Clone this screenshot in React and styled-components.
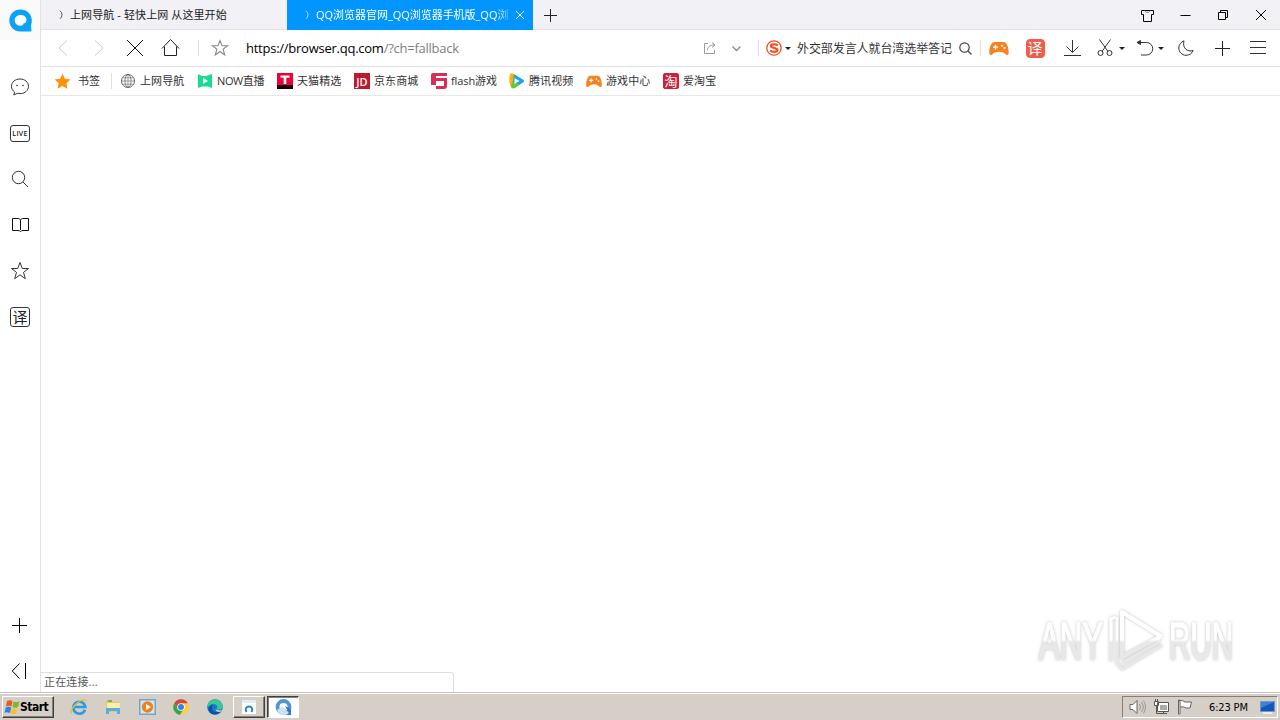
import React from "react";
import styled, { createGlobalStyle, css } from "styled-components";

const GlobalStyle = createGlobalStyle`
  * { box-sizing: border-box; }
  body { margin: 0; overflow: hidden; background: #fff; }
  svg { display: block; flex: none; overflow: visible; }
`;

const uiFont = `"Open Sans", "Noto Sans CJK SC", sans-serif`;

const Desktop = styled.div`
  position: relative;
  display: flex;
  flex-direction: column;
  width: 1280px;
  height: 720px;
  font-family: ${uiFont};
  font-size: 11px;
  color: #333;
  white-space: nowrap;
`;

const BrowserWindow = styled.div`
  display: flex;
  height: 692px;
`;

const Sidebar = styled.nav`
  display: flex;
  flex-direction: column;
  gap: 6px;
  width: 41px;
  padding-bottom: 1px;
  border-right: 1px solid #e2e2e2;
  background: #fff;
`;

const SideSlot = styled.div`
  display: flex;
  align-items: center;
  justify-content: center;
  height: 40px;
  margin-top: ${(p) => p.$mt || "0"};
  padding-left: ${(p) => p.$pl || 0}px;
  padding-right: ${(p) => p.$pr || 0}px;
  background: ${(p) => p.$bg || "transparent"};
`;

const Main = styled.main`
  position: relative;
  display: flex;
  flex-direction: column;
  flex: 1;
`;

const TabStrip = styled.div`
  display: flex;
  height: 30px;
  background: #f1f1f6;
  box-shadow: inset 0 -1px #e3e3e6;
`;

const Tab = styled.div`
  display: flex;
  align-items: center;
  width: 246px;
  height: 30px;
  padding-left: 18px;
  ${(p) =>
    p.$active
      ? css`
          color: #fff;
          background: #0095ff;
        `
      : css`
          color: #222;
        `}
`;

const TabTitle = styled.span`
  width: 193px;
  margin: 0 4px 0 6px;
  line-height: 20px;
  letter-spacing: ${(p) => p.$ls || "0"};
  mask-image: ${(p) => (p.$fade ? "linear-gradient(90deg, #000 93%, rgba(0,0,0,.3))" : "none")};
`;

const Spacer = styled.div`
  flex: 1;
`;

const Slot = styled.div`
  display: flex;
  flex: none;
  align-items: center;
  justify-content: center;
  width: ${(p) => p.$w || 36}px;
  margin-left: ${(p) => p.$ml || 0}px;
`;

const Toolbar = styled.div`
  display: flex;
  align-items: center;
  height: 37px;
  padding: 0 4px;
  border-bottom: 1px solid #e2e2e2;
`;

const Divider = styled.i`
  width: 1px;
  height: 16px;
  margin-left: ${(p) => p.$ml}px;
  background: #e0e0e0;
`;

const Address = styled.div`
  flex: 1;
  padding-left: 8px;
  font-size: 13px;
  line-height: 20px;
  letter-spacing: ${(p) => p.$ls};
  color: #000;
  span { color: #808080; }
`;

const SearchText = styled.div`
  width: 156px;
  margin: 1px 0 0 4px;
  font-size: 12px;
  line-height: 20px;
  letter-spacing: -0.08px;
`;

const Caret = styled.i`
  border: 3px solid transparent;
  border-top-color: #222;
  border-bottom: 0;
`;

const Bookmarks = styled.div`
  display: flex;
  align-items: center;
  height: 29px;
  padding-left: 13px;
  border-bottom: 1px solid #e8e8e8;
`;

const Bookmark = styled.div`
  display: flex;
  align-items: center;
  gap: ${(p) => p.$gap || 4}px;
  width: ${(p) => p.$w}px;
  line-height: 18px;
  letter-spacing: ${(p) => p.$ls || "0.1px"};
`;

const StatusBubble = styled.div`
  width: 413px;
  height: 20px;
  padding-left: 3px;
  border: 1px solid #dedede;
  border-width: 1px 1px 0 0;
  border-radius: 0 3px 0 0;
  line-height: 18px;
  letter-spacing: 0.15px;
  color: #555;
`;

const Watermark = styled.svg`
  position: absolute;
  left: 990px;
  top: 602px;
`;

const Taskbar = styled.footer`
  display: flex;
  align-items: center;
  height: 28px;
  padding: 1px 2px 0;
  background: #d6cfc7;
  border-top: 1px solid #c8c3bc;
  box-shadow: inset 0 1px #fff;
`;

const raised = css`
  border: 1px solid;
  border-color: #fff #404040 #404040 #fff;
  box-shadow: inset -1px -1px #857f78;
`;

const StartButton = styled.button`
  display: flex;
  align-items: center;
  width: 52px;
  height: 22px;
  padding: 0 0 0 1px;
  background: #d6cfc7;
  ${raised}
  font: bold 12px "DejaVu Sans Condensed", "DejaVu Sans", sans-serif;
  letter-spacing: -0.5px;
  color: #000;
`;

const TaskButton = styled.div`
  display: flex;
  align-items: center;
  justify-content: center;
  width: 32px;
  height: 22px;
  margin-left: ${(p) => p.$ml || 0}px;
  background: #d6cfc7;
  ${raised}
  ${(p) =>
    p.$active &&
    css`
      background: #fff;
      border-color: #404040 #fff #fff #404040;
      box-shadow: inset 1px 1px #857f78;
    `}
`;

const Tray = styled.div`
  display: flex;
  align-items: center;
  width: 156px;
  height: 22px;
  border: 1px solid;
  border-color: #857f78 #fff #fff #857f78;
`;

const Clock = styled.span`
  width: 41px;
  margin-left: 12px;
  font: 11px "DejaVu Sans Condensed", "DejaVu Sans", sans-serif;
  letter-spacing: -0.15px;
  color: #000;
`;

const Icon = ({ w = 20, h, s = "#333", sw = 1, f = "none", children }) => (
  <svg width={w} height={h || w} viewBox={`0 0 ${w} ${h || w}`} fill={f} stroke={s} strokeWidth={sw}>
    {children}
  </svg>
);

const starPath = "M10 1.5l2.3 6h6.2l-5 3.9 1.8 6.3-5.3-3.8-5.3 3.8 1.8-6.3-5-3.9h6.2z";
const fullStarPath = "M10 1l2.900 5.800 6.300.8-4.600 4.400 1.200 6.500L10 15.400 4.200 18.500l1.200-6.500L.8 7.600l6.300-.8z";

const Spinner = ({ s }) => (
  <Icon w={5} h={10} s={s}><path d="M1 .8q2 1.400 2 4t-2 4" /></Icon>
);

const QQLogo = () => (
  <svg width="23" height="23" viewBox="0 0 24 24">
    <path fill="#0ca2f8" d="M12 .5C5.200.5.3 5.600.3 12S5.400 23.500 12 23.500h10.500q1 0 1-1l-.6-5.300c.6-1.500.9-3.300.9-5.200C23.800 5.600 18.800.5 12 .5z" />
    <path fill="#fff" d="M12.200 6.200c-4 0-6.200 2.600-6.200 5.600 0 3.400 2.600 5.800 6 5.600 2.400-.1 3.200-1.200 3-2.500 1.500 0 3-.8 3.200-3 .3-3.400-2.400-5.700-6-5.700z" />
  </svg>
);

const Gamepad = ({ w = 20, h = 15 }) => (
  <svg width={w} height={h} viewBox="0 0 20 16" preserveAspectRatio="none">
    <path fill="#f78320" d="M5.500 1h9c4 0 5.500 8 5.200 12-.2 2.400-2 2.300-3.400.9-3-3.400-9.600-3.400-12.600 0C2.300 15.300.5 15.400.3 13 0 9 1.500 1 5.500 1z" />
    <path stroke="#fff" strokeWidth="1.500" d="M6.500 4v5M4 6.500h5" />
    <circle cx="13" cy="5" r="1.100" fill="#fff" />
    <circle cx="15.500" cy="7.500" r="1.100" fill="#fff" />
  </svg>
);

const Glyph = styled.span`
  display: flex;
  align-items: center;
  justify-content: center;
  width: ${(p) => p.$size}px;
  height: ${(p) => p.$size}px;
  border: 1px solid ${(p) => p.$line || p.$bg};
  border-radius: ${(p) => (p.$r === undefined ? 3 : p.$r)}px;
  background: ${(p) => p.$bg || "none"};
  color: ${(p) => p.$color || "#fff"};
  font-size: ${(p) => p.$fs}px;
  font-weight: ${(p) => p.$weight || 400};
  line-height: 1;
  letter-spacing: 0;
`;

const LiveBadge = styled(Glyph)`
  width: 20px;
  height: 17px;
  font: 600 7px "Open Sans", sans-serif;
  letter-spacing: 0.3px;
`;

const sideTools = [
  <Icon><path d="M10 2c-5 0-8.500 3.200-8.500 7.300 0 2.500 1.200 4.400 3 5.700L3.800 18l3.600-1.700c.8.200 1.700.3 2.600.3 5 0 8.500-3.200 8.500-7.300S15 2 10 2z" /><circle cx="7" cy="8.500" r=".8" fill="#333" stroke="none" /><circle cx="13" cy="8.500" r=".8" fill="#333" stroke="none" /></Icon>,
  <LiveBadge $line="#333" $color="#222">LIVE</LiveBadge>,
  <Icon><circle cx="8.500" cy="8.500" r="6.200" /><path d="M13 13l5 5" /></Icon>,
  <Icon s="#111"><path d="M10.500 5V15M10.500 5C10 4 9 3.500 8 3.500H2.500v12H8c1 0 2 .5 2.500 1 .5-.5 1.500-1 2.500-1h5.500v-12H13c-1 0-2 .5-2.500 1.500z" /></Icon>,
  <Icon><path d={starPath} /></Icon>,
  <Glyph $size={20} $fs={15} $line="#333" $color="#222">译</Glyph>,
];

const bookmarks = [
  { w: 77, gap: 4, text: "上网导航", icon: <Icon w={16} s="#666"><circle cx="8" cy="8" r="6.500" /><ellipse cx="8" cy="8" rx="3" ry="6.500" strokeWidth=".8" /><path d="M1.500 8h13M2.500 4.800h11M2.500 11.200h11M8 1.500v13" strokeWidth=".6" /></Icon> },
  { w: 80, ls: "-0.4px", text: "NOW直播", icon: <Icon w={16} s="none"><path fill="#18dc92" d="M1 1l4 2 4 0 6-2v14l-4-1.500H5L1 15z" /><path fill="#fff" d="M6 5l5 3-5 3z" /></Icon> },
  { w: 77, text: "天猫精选", icon: <Icon w={16} s="none"><path fill="#f00037" d="M0 0h16v12H0z" /><path fill="#170006" d="M0 12h16v4H0z" /><path fill="#fff" d="M3.500 2.500h9v2.300H9.300V11H6.700V4.800H3.500z" /></Icon> },
  { w: 77, text: "京东商城", icon: <Glyph $size={16} $bg="#bd1a2d" $fs={11} $r={0} $weight={600}>JD</Glyph> },
  { w: 78, ls: "-0.1px", text: "flash游戏", icon: <Icon w={16} s="none"><path fill="#dc2b54" d="M2 0h14v3H5v2h11v8q0 3-3 3H5v-3h8V8H5v4H0V2q0-2 2-2z" /></Icon> },
  { w: 77, text: "腾讯视频", icon: <Icon w={16} s="none"><path fill="#ffb000" d="M.5 4C1-1 3 .1 6 1.700l3 2.100-7 9.700C.3 10.500.2 7 .5 4z" /><path fill="#19a6ef" d="M5 1.200l9 5.300q2 1.500 0 3l-8 5.300q-2 1-3-.5z" /><path fill="#64c932" d="M1.700 13C3 16 4 15.800 6 14.800L11 11.500 4 9z" /><path fill="#fff" d="M5.500 5l5 3-5 3z" /></Icon> },
  { w: 77, text: "游戏中心", icon: <Gamepad w={16} h={13} /> },
  { w: 60, text: "爱淘宝", icon: <Glyph $size={16} $bg="#cf2038" $fs={13} $r={2}>淘</Glyph> },
];

const Plus = ({ w = 15, s = "#222" }) => (
  <Icon w={w} s={s}><path d={`M${w / 2} 0v${w}M0 ${w / 2}h${w}`} /></Icon>
);

export default function App() {
  return (
    <Desktop>
      <GlobalStyle />
      <BrowserWindow>
        <Sidebar>
          <SideSlot $bg="#fafafa" $pl={1}><QQLogo /></SideSlot>
          {sideTools.map((icon, i) => (
            <SideSlot key={i} $mt={i === 0 ? "21px" : "0"}>{icon}</SideSlot>
          ))}
          <SideSlot $mt="auto" $pr={1}><Plus s="#000" /></SideSlot>
          <SideSlot $pr={2}><Icon w={16} s="#000"><path d="M8.500.5L1.300 8l7.200 7.500M14.500 0v16" /></Icon></SideSlot>
        </Sidebar>
        <Main>
          <TabStrip>
            <Tab>
              <Spinner s="#555" />
              <TabTitle $ls="0.1px">上网导航 - 轻快上网 从这里开始</TabTitle>
            </Tab>
            <Tab $active>
              <Spinner s="#bfe3ff" />
              <TabTitle $fade $ls="-0.03px">QQ浏览器官网_QQ浏览器手机版_QQ浏</TabTitle>
              <Icon w={14} s="#fff"><path d="M3 3l8 8M11 3l-8 8" /></Icon>
            </Tab>
            <Slot $w={35}><Plus w={13} /></Slot>
            <Spacer />
            <Slot $w={38}><Icon w={13} s="#000"><path d="M.5 1.500h12v4h-2v7h-8v-7h-2z" /><path d="M4 1.500c.5 2.500 4.500 2.500 5 0" stroke="#777" /></Icon></Slot>
            <Slot $w={38}><Icon w={11} h={1} s="#000"><path d="M.5.5h10" /></Icon></Slot>
            <Slot $w={38}><Icon w={10} s="#000"><path d="M.5 2.500h7v7h-7zM2.500 2.500v-2h7v7h-2" /></Icon></Slot>
            <Slot $w={38}><Icon w={10} s="#000"><path d="M0 0l10 10M10 0L0 10" /></Icon></Slot>
          </TabStrip>
          <Toolbar>
            <Slot><Icon w={16} s="#ccc"><path d="M12 .5L4 8l8 7.500" /></Icon></Slot>
            <Slot><Icon w={16} s="#ccc"><path d="M4 .5L12 8l-8 7.500" /></Icon></Slot>
            <Slot><Icon w={16} s="#111"><path d="M0 0l16 16M16 0L0 16" /></Icon></Slot>
            <Slot><Icon w={20} s="#222"><path d="M1 10.500L9.500 1.500l8.500 9M3.500 8.500v9h12v-9" /></Icon></Slot>
            <Divider $ml={9} />
            <Slot $ml={3}><svg width="16" height="16" viewBox="1 1 18 18" fill="none" stroke="#888" strokeWidth="1.200"><path d={starPath} /></svg></Slot>
            <Address $ls="-0.25px">https://browser.qq.com<span>/?ch=fallback</span></Address>
            <Slot $w={24}><Icon w={12} s="#999"><path d="M4 1.500H.5v10h10V8M3.500 8.500c0-3.500 2-5.500 7-5.500M8 .5L11 3 8 5.500" /></Icon></Slot>
            <Slot $w={28}><Icon w={9} h={5} s="#888" sw={1.3}><path d="M.5.5l4 4 4-4" /></Icon></Slot>
            <Divider $ml={8} />
            <Slot $w={16} $ml={7}>
              <Icon w={16} s="#f05023" sw={1.3}><circle cx="8" cy="8" r="7.200" /><path strokeWidth="2.200" d="M12 5.200C9 3.700 4.800 4 4.800 6s6.700 1.700 6.700 4-4.500 2.200-7.500.8" /></Icon>
            </Slot>
            <Slot $w={11}><Caret /></Slot>
            <SearchText>外交部发言人就台湾选举答记</SearchText>
            <Slot $w={25}><Icon w={13} s="#444" sw={1.2}><circle cx="5.500" cy="5.500" r="4.700" /><path d="M9 9l3.500 3.500" /></Icon></Slot>
            <Divider $ml={2} />
            <Slot><Gamepad /></Slot>
            <Slot><Glyph $size={19} $bg="#f15b49" $fs={15} $r={4}>译</Glyph></Slot>
            <Slot $w={38}><Icon w={17}><path d="M8.500 0v12M2.500 6.500l6 6 6-6M0 15.500h17" /></Icon></Slot>
            <Slot $w={28}><Icon w={16} h={18}><path d="M2.500.5l8.500 12M13.500.5L5 12.500" /><circle cx="3.500" cy="14" r="2.500" /><circle cx="12.500" cy="14" r="2.500" /></Icon></Slot>
            <Slot $w={6}><Caret /></Slot>
            <Slot $ml={6} $w={27}><Icon w={17} h={16}><path d="M1 2.500h9.500a6 6 0 0 1 0 12.500H5" /><path fill="#333" d="M4.500.5v4L1 2.500z" /></Icon></Slot>
            <Slot $w={6}><Caret /></Slot>
            <Slot $ml={4}><Icon w={16}><path d="M6 .8C3 2 .8 4.500.8 8c0 4 3.200 7.300 7.300 7.300 3.300 0 5.900-1.800 7-4.800C9.500 12.500 4 8 6 .8z" /></Icon></Slot>
            <Slot><Plus /></Slot>
            <Slot><Icon w={16} h={14}><path d="M0 .5h16M0 6.500h16M0 12.500h16" /></Icon></Slot>
          </Toolbar>
          <Bookmarks>
            <Bookmark $w={57} $gap={7}>
              <svg width="17" height="17" viewBox="0 0 20 20"><path fill="#ff9208" d={fullStarPath} /></svg>
              书签
            </Bookmark>
            <Divider $ml={0} />
            <Slot $w={8} />
            {bookmarks.map((b) => (
              <Bookmark key={b.text} $w={b.w} $gap={b.gap} $ls={b.ls}>{b.icon}{b.text}</Bookmark>
            ))}
          </Bookmarks>
          <Spacer />
          <StatusBubble>正在连接...</StatusBubble>
          <Watermark width="205" height="78" viewBox="1031 602 205 78">
            <defs>
              <linearGradient id="wm" gradientUnits="userSpaceOnUse" x1="0" y1="612" x2="0" y2="670">
                <stop offset=".48" stopColor="#fff" />
                <stop offset=".52" stopColor="#e8e8e8" />
              </linearGradient>
              <filter id="glow" x="-10%" y="-15%" width="120%" height="130%">
                <feDropShadow dx="0" dy="0" stdDeviation="1.700" floodColor="#777" floodOpacity=".5" />
              </filter>
            </defs>
            <g filter="url(#glow)" fill="url(#wm)" stroke="url(#wm)" strokeWidth="1.300" fontFamily="'Liberation Sans Narrow', 'Liberation Sans'" fontSize="51">
              <text x="1039" y="659" textLength="64" lengthAdjust="spacingAndGlyphs">ANY</text>
              <text x="1169" y="659" textLength="64" lengthAdjust="spacingAndGlyphs">RUN</text>
              <g fill="none" strokeWidth="4" strokeLinejoin="round">
                <path d="M1162 637L1122 612v45l38-20" />
                <path d="M1116 617l-5 2v42" strokeWidth="3" />
                <path d="M1117 617v46l5 6 40-24" strokeWidth="2.500" />
                <path d="M1122 663l38-22" strokeWidth="2.500" />
              </g>
            </g>
          </Watermark>
        </Main>
      </BrowserWindow>
      <Taskbar>
        <StartButton>
          <Icon w={16} s="none">
            <path fill="#e85a24" d="M3 2q3-1.500 5.500 0L7.500 7.500Q5 6 2 7.500z" />
            <path fill="#79b735" d="M9.500 2.500q3 1.300 6-.2L14 8q-3 1.300-5.500 0z" />
            <path fill="#2f83d8" d="M1.800 8.500q3-1.300 5.500 0L6 14q-3-1.500-5.500-.3z" />
            <path fill="#f8c12a" d="M8.200 9q3 1.300 5.500 0l-1.300 5.500q-3 1.300-5.500 0z" />
          </Icon>
          Start
        </StartButton>
        <Slot $w={34} $ml={8}>
          <Icon w={18} s="#2a9be0" sw={2.6}><path d="M15 11.800A6 6 0 1 1 15.300 9H5" /><path stroke="#eab83a" strokeWidth="1.300" d="M1.500 15.500C-1 12 10-.5 16.500 2.500" /></Icon>
        </Slot>
        <Slot $w={34}>
          <Icon w={16} s="none"><path fill="#e7c666" d="M1 1h5l1 2h8v10H1z" /><path fill="#faedad" d="M2 4h13v7H2z" /><path fill="#59ade0" d="M1 9h14v6h-3v-3H4v3H1z" /><path fill="#66b966" d="M3 1h4v2H3z" /></Icon>
        </Slot>
        <Slot $w={34}>
          <Icon w={17} s="none"><path fill="#70a5d1" d="M0 0h17v16H0z" /><path fill="#d4e6f4" d="M1.500 1.500h14v13h-14z" /><circle cx="8.500" cy="8" r="5.700" fill="#f18218" /><path fill="#fff" d="M7 5l5 3-5 3z" /></Icon>
        </Slot>
        <Slot $w={34}>
          <Icon w={16} s="none"><circle cx="8" cy="8" r="7.800" fill="#ffcd3b" /><path fill="#dd4236" d="M1.200 4.200A7.800 7.800 0 0 1 14.800 4.200H8L5 10z" /><path fill="#33a653" d="M1.200 4.200A7.800 7.800 0 0 0 7 15.800L10.500 10H5z" /><circle cx="8" cy="8" r="3.800" fill="#fff" /><circle cx="8" cy="8" r="3" fill="#397fe6" /></Icon>
        </Slot>
        <Slot $w={34}>
          <Icon w={16} s="none"><circle cx="8" cy="8" r="7.800" fill="#1479c9" /><path fill="#38c894" d="M1 5C3-1 13-1.500 15.500 6c1 4-2 5.500-6 4 2-2 0-5-3-5-2.500 0-4 1-5.500 3z" /><path fill="#0c539f" d="M6 6c-3 5 1 9 8 6-3 5-10 4.500-12 0-1.500-3 1-6 4-6z" /><path fill="#d6cfc7" d="M8.500 10c3 2 6 1.500 7 .5l-1.500 2c-3 1-5 0-5.500-2.500z" /></Icon>
        </Slot>
        <TaskButton $ml={1}>
          <Icon w={14} s="none"><path fill="#fff" d="M0 0h14v14H0z" /><path fill="#e1eef7" d="M0 0h14v3H0z" /><path stroke="#1789c6" strokeWidth="2" fill="none" d="M4.500 12C2.500 9 4.500 6.500 7 6.500S11.500 9 9.500 12" /></Icon>
        </TaskButton>
        <TaskButton $active $ml={2}>
          <Icon w={17} s="none"><circle cx="8.500" cy="8" r="6" stroke="#4b96d6" strokeWidth="3.800" /><path fill="#c9e3f2" d="M2 10q2 1 3-1 3-2 5 1l5 5-7 1q-5 0-6-6z" /><path fill="#3676bf" d="M10 7l6 3v6h-5l3-2z" /></Icon>
        </TaskButton>
        <Spacer />
        <Tray>
          <Slot $w={26} $ml={1}>
            <Icon w={17} h={16} s="#666"><path fill="#fff" d="M1 5.500h3l4-4v13l-4-4H1z" /><path d="M10.500 5q2 3 0 6M12.500 3q3.500 5 0 10M14.500 1.500q4 6.500 0 13" stroke="#888" strokeWidth=".8" /></Icon>
          </Slot>
          <Slot $w={22}>
            <Icon w={16} s="#555"><path fill="#fff" d="M4.500 3.500h11v9h-11zM1.500 2.500h4v4h-4z" /><path d="M2.500 0v2M4.500 0v2M3.500 7v7.500H14M10.500 12.500v2" /><path fill="#aaa" stroke="none" d="M7 6h7v5H7z" /></Icon>
          </Slot>
          <Slot $w={25}>
            <Icon w={16} s="#666"><path fill="#fff" d="M2 1.500q4-.5 6 1.500h6.500l-1.500 6H9Q6 7 3 8M1.500 1v14h1.500V1z" /></Icon>
          </Slot>
          <Clock>6:23 PM</Clock>
          <Slot $w={16} $ml={9}>
            <Icon w={15} h={13} s="none"><path fill="#7799bb" d="M0 0h15v11H0z" /><path fill="#1456bd" d="M1 1h13v9H1z" /><path fill="#3b83d8" d="M1 1h13L1 7z" /><path fill="#eee" d="M3 11h9v2H3z" /></Icon>
          </Slot>
        </Tray>
      </Taskbar>
    </Desktop>
  );
}
